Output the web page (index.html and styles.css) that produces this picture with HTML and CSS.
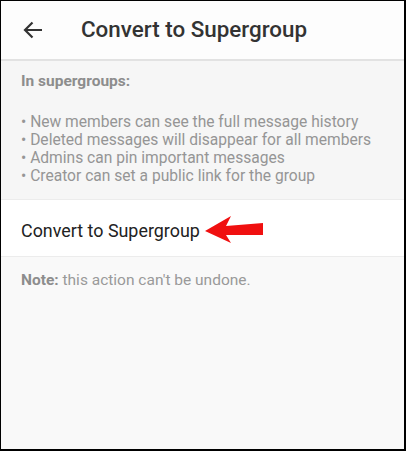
FILE: index.html
```html
<!DOCTYPE html>
<html lang="en">
<head>
    <meta charset="UTF-8">
    <meta name="viewport" content="width=device-width, initial-scale=1.0">
    <title>Convert to Supergroup</title>
    <link rel="stylesheet" href="styles.css">
</head>
<body>
    <div class="screen">
        <div class="header">
            <svg class="back" width="20" height="18" viewBox="0 0 20 18">
                <path d="M19 9H2M9.5 1.5L2 9l7.5 7.5" fill="none" stroke="#333" stroke-width="2.2"/>
            </svg>
            <h1>Convert to Supergroup</h1>
        </div>
        <div class="info">
            <p class="info-title">In supergroups:</p>
            <ul class="perks">
                <li>• New members can see the full message history</li>
                <li>• Deleted messages will disappear for all members</li>
                <li>• Admins can pin important messages</li>
                <li>• Creator can set a public link for the group</li>
            </ul>
        </div>
        <div class="action">
            <span>Convert to Supergroup</span>
            <svg class="pointer" width="59" height="29" viewBox="0 0 59 29">
                <path d="M0 16L26 1 21 11 58 8 58 20 21 20 26 28Z" fill="#f01010"/>
            </svg>
        </div>
        <p class="note"><b>Note:</b> this action can't be undone.</p>
    </div>
</body>
</html>
```

FILE: styles.css
```css
body {
    margin: 0;
    background-color: #000;
    font-family: Roboto, "Noto Sans", Arial, sans-serif;
}
.screen {
    margin: 1px 2px 2px 1px;
    height: 448px;
    background-color: #f9f9f9;
    display: flex;
    flex-direction: column;
}
.header {
    height: 58px;
    background-color: #fdfdfd;
    display: flex;
    align-items: center;
    gap: 38px;
    padding-left: 22px;
    border-bottom: 2px solid #e2e2e2;
}
.back {
    margin-top: -1px;
}
.header h1 {
    margin: -3px 0 0;
    font-size: 22.4px;
    font-weight: 500;
    color: #333;
}
.info {
    background-color: #f6f6f6;
    padding: 11px 20px 14px;
    border-bottom: 1px solid #ececec;
}
.info-title {
    margin: 0 0 23px;
    font-size: 15.5px;
    font-weight: 700;
    color: #8d8d8d;
}
.perks {
    list-style: none;
    margin: 0;
    padding: 0;
    font-size: 15.6px;
    line-height: 18px;
    color: #959595;
}
.action {
    height: 57px;
    box-sizing: border-box;
    padding: 4px 0 0 20px;
    background-color: #fff;
    display: flex;
    align-items: center;
    gap: 5px;
    border-bottom: 1px solid #ececec;
}
.action span {
    font-size: 17.9px;
    color: #222;
}
.pointer {
    margin-top: -2px;
}
.note {
    margin: 14px 20px 0;
    font-size: 15.5px;
    color: #9a9a9a;
}
.note b {
    color: #8d8d8d;
}
```
